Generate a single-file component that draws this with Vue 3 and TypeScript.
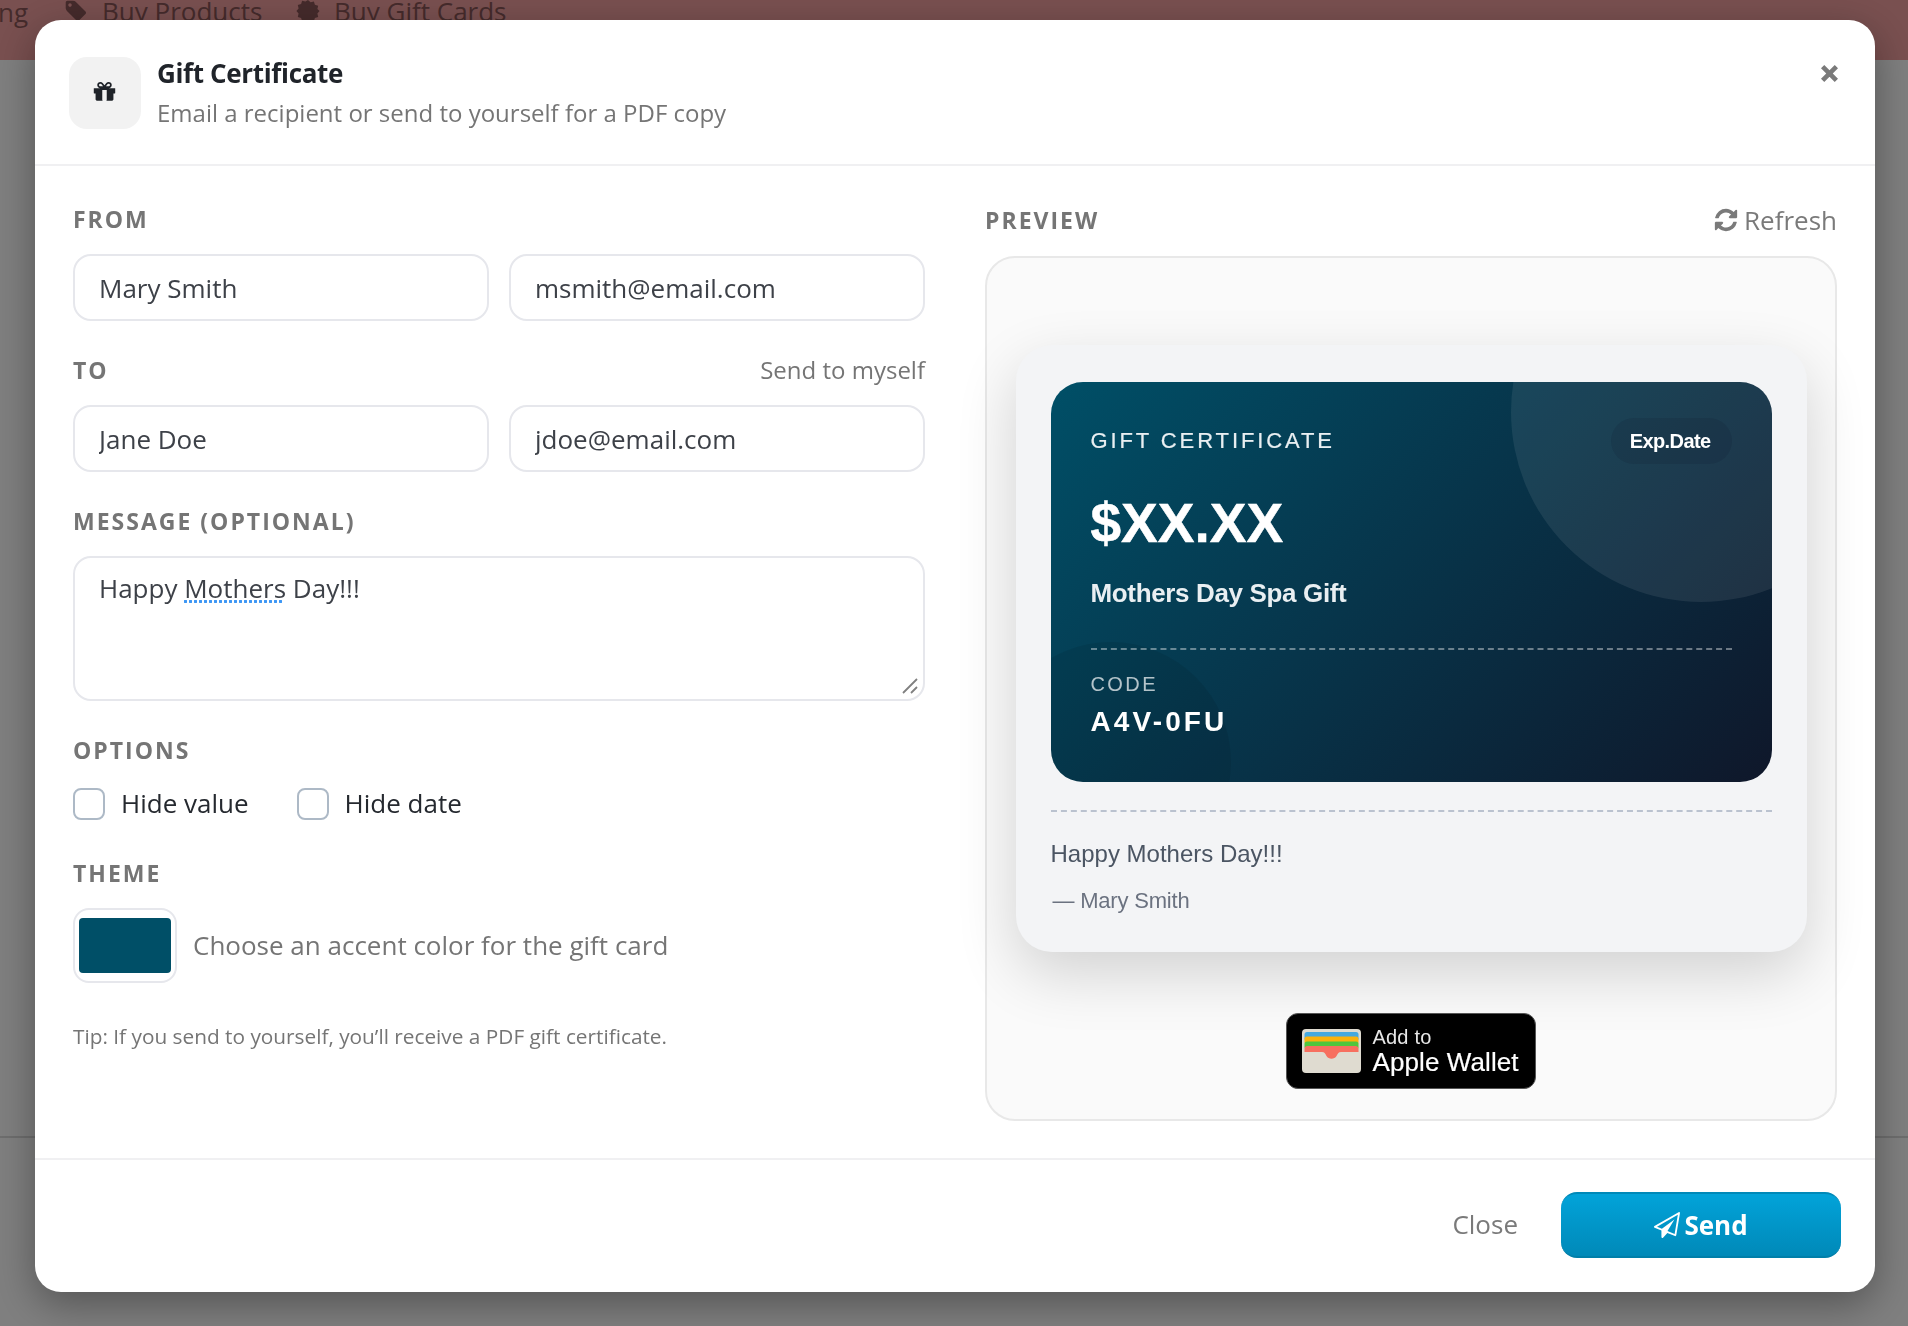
<script setup lang="ts">
import { ref } from 'vue'

const fromName = ref('Mary Smith')
const fromEmail = ref('msmith@email.com')
const toName = ref('Jane Doe')
const toEmail = ref('jdoe@email.com')
const message = ref('Happy Mothers Day!!!')
const accent = '#004f67'
</script>

<template>
  <div class="page">
    <nav class="topnav">
      <span class="navtext cut">ng</span>
      <span class="navitem">
        <svg class="navicon" viewBox="0 0 1792 1792"><path fill="currentColor" d="M576 448q0-53-37.5-90.5t-90.5-37.5-90.5 37.5-37.5 90.5 37.5 90.5 90.5 37.5 90.5-37.5 37.5-90.5zm1067 576q0 53-37 90l-491 492q-39 37-91 37-53 0-90-37l-715-716q-38-37-64.5-101t-26.5-117v-416q0-52 38-90t90-38h416q53 0 117 26.5t102 64.5l715 714q37 39 37 91z"/></svg>
        <span class="navtext">Buy Products</span>
      </span>
      <span class="navitem">
        <svg class="navicon" viewBox="0 0 24 24"><path fill="currentColor" d="M12 1l2.6 2.2 3.3-.8 1 3.3 3.3 1-.8 3.3L23.6 12l-2.2 2.6.8 3.3-3.3 1-1 3.3-3.3-.8L12 23.6l-2.6-2.2-3.3.8-1-3.3-3.3-1 .8-3.3L.4 12l2.2-2.6-.8-3.3 3.3-1 1-3.3 3.3.8z"/></svg>
        <span class="navtext">Buy Gift Cards</span>
      </span>
    </nav>
    <div class="page-rule"></div>
  </div>

  <div class="backdrop">
    <section class="modal">
      <header class="mhead">
        <div class="gift-tile">
          <svg class="gift" viewBox="0 0 1792 1792"><path fill="currentColor" d="M1056 1356v-716h-320v716q0 25 18 38.5t46 13.5h192q28 0 46-13.5t18-38.5zm-456-972h195l-126-161q-26-31-69-31-40 0-68 28t-28 68 28 68 68 28zm688-96q0-40-28-68t-68-28q-43 0-69 31l-125 161h194q40 0 68-28t28-68zm376 256v320q0 14-9 23t-23 9h-96v416q0 40-28 68t-68 28h-1088q-40 0-68-28t-28-68v-416h-96q-14 0-23-9t-9-23v-320q0-14 9-23t23-9h440q-93 0-158.5-65.5t-65.5-158.5 65.5-158.5 158.5-65.5q107 0 168 77l128 165 128-165q61-77 168-77 93 0 158.5 65.5t65.5 158.5-65.5 158.5-158.5 65.5h440q14 0 23 9t9 23z"/></svg>
        </div>
        <div class="titles">
          <h2>Gift Certificate</h2>
          <p>Email a recipient or send to yourself for a PDF copy</p>
        </div>
        <button class="x" aria-label="Close">
          <svg viewBox="0 0 18 18" width="19" height="19"><path d="M2.5 2.5l13 13M15.5 2.5l-13 13" stroke="currentColor" stroke-width="4.4" fill="none"/></svg>
        </button>
      </header>

      <div class="mbody">
        <div class="form">
          <div class="block first">
            <div class="lab">FROM</div>
            <div class="two">
              <input v-model="fromName" />
              <input v-model="fromEmail" />
            </div>
          </div>
          <div class="block">
            <div class="lab-row">
              <div class="lab">TO</div>
              <a class="myself">Send to myself</a>
            </div>
            <div class="two">
              <input v-model="toName" />
              <input v-model="toEmail" />
            </div>
          </div>
          <div class="block">
            <div class="lab">MESSAGE (OPTIONAL)</div>
            <div class="ta-wrap">
              <textarea v-model="message" spellcheck="false"></textarea>
              <span class="squiggle"></span>
              <svg class="grip" viewBox="0 0 16 16" width="16" height="16"><path d="M1 15L15 1M9 15l6-6" stroke="#808080" stroke-width="1.8" fill="none"/></svg>
            </div>
          </div>
          <div class="block">
            <div class="lab">OPTIONS</div>
            <div class="checks">
              <label class="chk"><input type="checkbox" /><span>Hide value</span></label>
              <label class="chk"><input type="checkbox" /><span>Hide date</span></label>
            </div>
          </div>
          <div class="block theme">
            <div class="lab">THEME</div>
            <div class="theme-row">
              <div class="swatch"><div class="swatch-fill" :style="{ background: accent }"></div></div>
              <span class="hint">Choose an accent color for the gift card</span>
            </div>
          </div>
          <p class="tip">Tip: If you send to yourself, you’ll receive a PDF gift certificate.</p>
        </div>

        <aside class="prev">
          <div class="lab-row prev-head">
            <div class="lab">PREVIEW</div>
            <a class="refresh">
              <svg viewBox="0 0 1792 1792" width="26" height="26"><path fill="currentColor" d="M1639 1056q0 5-1 7-64 268-268 434.5t-478 166.5q-146 0-282.5-55t-243.5-157l-129 129q-19 19-45 19t-45-19-19-45v-448q0-26 19-45t45-19h448q26 0 45 19t19 45-19 45l-137 137q71 66 161 102t187 36q134 0 250-65t186-179q11-17 53-117 8-23 30-23h192q13 0 22.5 9.5t9.5 22.5zm25-800v448q0 26-19 45t-45 19h-448q-26 0-45-19t-19-45 19-45l138-138q-148-137-349-137-134 0-250 65t-186 179q-11 17-53 117-8 23-30 23h-199q-13 0-22.5-9.5t-9.5-22.5v-7q65-268 270-434.5t480-166.5q146 0 284 55.5t245 156.5l130-129q19-19 45-19t45 19 19 45z"/></svg>
              <span>Refresh</span>
            </a>
          </div>
          <div class="panel">
            <div class="sheet">
              <div class="gcard">
                <span class="orb orb-a"></span>
                <span class="orb orb-b"></span>
                <div class="gc-top">
                  <span class="gc-title">GIFT CERTIFICATE</span>
                  <span class="gc-pill">Exp.Date</span>
                </div>
                <div class="gc-amt">$XX.XX</div>
                <div class="gc-name">Mothers Day Spa Gift</div>
                <div class="gc-rule"></div>
                <div class="gc-codelab">CODE</div>
                <div class="gc-code">A4V-0FU</div>
              </div>
              <div class="sheet-rule"></div>
              <div class="note">Happy Mothers Day!!!</div>
              <div class="sign">— Mary Smith</div>
            </div>
            <div class="wallet">
              <svg class="wallet-ico" viewBox="0 0 59 44" width="59" height="44">
                <rect x="0" y="0" width="59" height="44" rx="4" fill="#dfdbd0"/>
                <rect x="2.5" y="3" width="54" height="9" rx="2.5" fill="#45a9e0"/>
                <rect x="2.5" y="7.5" width="54" height="8" rx="2.5" fill="#fcb20c"/>
                <rect x="2.5" y="12.5" width="54" height="8" rx="2.5" fill="#4fc63c"/>
                <path d="M2.5 20a3 3 0 0 1 3-3h48a3 3 0 0 1 3 3v3H39c-2.5 0-3 1.500-4.500 4-2 3.500-8 3.500-10 0-1.500-2.500-2-4-4.500-4H2.500z" fill="#f76f5f"/>
              </svg>
              <div class="wallet-txt">
                <span class="w1">Add to</span>
                <span class="w2">Apple Wallet</span>
              </div>
            </div>
          </div>
        </aside>
      </div>

      <footer class="mfoot">
        <button class="close">Close</button>
        <button class="send">
          <svg viewBox="0 0 1792 1792" width="26" height="26"><path fill="currentColor" d="M1764 11q33 24 27 64l-256 1536q-5 29-32 45-14 8-31 8-11 0-24-5l-527-215-298 327q-18 21-47 21-14 0-23-4-19-7-30-23.5t-11-36.5v-452l-472-193q-37-14-40-55-3-39 32-59l1664-960q35-21 68 2zm-342 1499l221-1323-1434 827 336 137 863-639-478 797z"/></svg>
          <span>Send</span>
        </button>
      </footer>
    </section>
  </div>
</template>

<style>
html, body { margin: 0; background: #fff; }
</style>

<style scoped>
* { box-sizing: border-box; }
.page { height: 1326px; background: #fff; overflow: hidden; font-family: "Open Sans", sans-serif; }
.topnav { height: 60px; background: #f3a0a0; position: relative; overflow: hidden; }
.navtext { font-size: 26px; line-height: 30px; color: #8a5657; white-space: nowrap; }
.cut { position: absolute; left: -2px; top: -3px; }
.navitem { position: absolute; top: -4px; display: flex; align-items: center; gap: 14px; color: #8a5657; }
.navitem:nth-child(2) { left: 64px; }
.navitem:nth-child(3) { left: 296px; }
.navicon { width: 24px; height: 24px; }
.page-rule { margin-top: 1076px; height: 2px; background: #dcdcdc; }

.backdrop {
  position: fixed; inset: 0; background: rgba(0, 0, 0, .5);
  font-family: "Open Sans", sans-serif;
}
.modal {
  position: absolute; left: 35px; top: 20px; width: 1840px; height: 1272px;
  background: #fff; border-radius: 26px; display: flex; flex-direction: column;
  box-shadow: 0 12px 40px rgba(0, 0, 0, .35); overflow: hidden;
}

.mhead {
  height: 146px; flex: none; border-bottom: 2px solid #f0f0f2;
  display: flex; align-items: flex-start; padding: 37px 35px 0 34px;
}
.gift-tile {
  width: 72px; height: 72px; background: #f2f2f2; border-radius: 18px; padding-right: 2px;
  display: flex; align-items: center; justify-content: center; color: #1f2329; flex: none;
}
.gift { width: 25px; height: 25px; }
.titles { margin-left: 16px; margin-top: -2px; }
.titles h2 { margin: 0; font-size: 26px; line-height: 36px; font-weight: 700; letter-spacing: -.35px; color: #20242a; }
.titles p { margin: 4px 0 0; font-size: 24px; line-height: 36px; color: #757575; }
.x {
  margin-left: auto; margin-right: 1px; margin-top: 7px; padding: 0; background: none; border: 0; color: #7a7a7a;
  display: flex;
}

.mbody { flex: 1; display: flex; gap: 60px; padding: 38px 38px 0 38px; min-height: 0; }
.form { width: 852px; flex: none; }
.prev { flex: 1; min-width: 0; }

.lab { font-size: 23px; line-height: 30px; font-weight: 700; letter-spacing: 2px; color: #757575; }
.lab-row { display: flex; justify-content: space-between; align-items: center; }
.block { margin-top: 34px; }
.block.first { margin-top: 0; }
.two { display: grid; grid-template-columns: 1fr 1fr; gap: 20px; margin-top: 20px; }
input:not([type]) , textarea {
  font-family: inherit; font-size: 26px; color: #3d4148; background: #fff;
  border: 2px solid #e6e7ec; border-radius: 18px; outline: 0; width: 100%;
}
input:not([type]) { height: 67px; padding: 0 24px; }
.myself { font-size: 24px; line-height: 30px; color: #757575; }
.ta-wrap { position: relative; margin-top: 20px; height: 145px; }
textarea { display: block; height: 145px; padding: 12px 24px; line-height: 36px; resize: none; }
.squiggle {
  position: absolute; left: 111px; top: 44px; width: 100px; height: 3px;
  background: radial-gradient(circle at 1.5px 1.5px, #3d97f5 1.4px, transparent 1.6px) 0 0 / 5px 3px repeat-x;
}
.grip { position: absolute; right: 7px; bottom: 7px; }

.checks { display: flex; gap: 48px; margin-top: 23px; height: 31px; align-items: center; }
.chk { display: flex; align-items: center; gap: 16px; font-size: 26px; line-height: 32px; color: #25292f; }
.chk span { padding-bottom: 2px; }
.chk input {
  appearance: none; width: 32px; height: 32px; margin: 0; background: #fff;
  border: 2px solid #adb9c6; border-radius: 8px;
}
.theme { margin-top: 39px; }
.theme-row { display: flex; align-items: center; gap: 16px; margin-top: 20px; }
.swatch {
  width: 104px; height: 75px; padding: 8px 4px; border: 2px solid #e6e7ec; border-radius: 16px; background: #fff;
}
.swatch-fill { width: 100%; height: 100%; border-radius: 4px; }
.hint { font-size: 26px; color: #757575; padding-bottom: 2px; }
.tip { margin: 37px 0 0; font-size: 20.8px; line-height: 32px; color: #757575; }

.prev-head { height: 30px; margin-top: 1px; margin-bottom: 21px; }
.refresh { display: flex; align-items: center; gap: 5px; font-size: 26px; line-height: 30px; color: #7a7a7a; }
.panel {
  height: 865px; border: 2px solid #e8e8e8; border-radius: 30px; background: #fafafa;
  padding: 87px 28px 0; display: flex; flex-direction: column; align-items: center;
}
.sheet {
  width: 791px; height: 607px; background: #f3f4f6; border-radius: 36px; padding: 37px 35px 0;
  box-shadow: 0 22px 60px rgba(0, 0, 0, .16); flex: none;
  font-family: "Liberation Sans", sans-serif;
}
.gcard {
  position: relative; overflow: hidden; height: 400px; border-radius: 32px; color: #fff;
  padding: 42px 40px 0; background: linear-gradient(135deg, #004f67 0%, #0f172a 100%);
}
.orb { position: absolute; border-radius: 50%; }
.orb-a { width: 380px; height: 380px; left: 460px; top: -160px; background: rgba(255, 255, 255, .08); }
.orb-b { width: 240px; height: 240px; left: -60px; top: 260px; background: rgba(0, 0, 0, .08); }
.gc-top { position: relative; display: flex; justify-content: space-between; align-items: center; height: 46px; margin-top: -6px; }
.gc-title { font-size: 22px; letter-spacing: 2.9px; color: #e9eff2; -webkit-text-stroke: .2px #e9eff2; }
.gc-pill {
  height: 46px; line-height: 46px; padding: 0 21px 0 19px; border-radius: 23px; font-size: 20px; font-weight: 700;
  letter-spacing: -.6px; background: rgba(15, 23, 42, .14);
}
.gc-amt { position: relative; font-size: 55px; font-weight: 700; line-height: 60px; margin-top: 29px; -webkit-text-stroke: .5px #fff; }
.gc-name { position: relative; font-size: 26px; font-weight: 700; line-height: 32px; letter-spacing: -.35px; margin-top: 24px; color: #e9eff2; }
.gc-rule { position: relative; border-top: 2px dashed rgba(255, 255, 255, .4); margin-top: 39px; }
.gc-codelab { position: relative; font-size: 20px; letter-spacing: 2.4px; line-height: 24px; margin-top: 22px; color: rgba(255, 255, 255, .7); }
.gc-code { position: relative; font-size: 28px; font-weight: 700; letter-spacing: 3.1px; line-height: 32px; margin-top: 10px; }
.sheet-rule { border-top: 2px dashed #bac2cf; margin-top: 28px; }
.note { font-size: 24px; line-height: 32px; color: #4b5563; margin-top: 26px; }
.sign { font-size: 22px; line-height: 30px; color: #6b7280; margin-top: 16px; padding-left: 2px; letter-spacing: -.2px; }

.wallet {
  width: 250px; height: 76px; margin-top: 61px; margin-right: 1px; background: #000; border-radius: 12px; flex: none;
  border: 1px solid #555; display: flex; align-items: center; padding-left: 15px; gap: 12px;
  font-family: "Liberation Sans", sans-serif; color: #fff;
}
.wallet-ico { flex: none; }
.wallet-txt { display: flex; flex-direction: column; }
.w1 { font-size: 20px; line-height: 21px; color: #e8e8e8; letter-spacing: .2px; }
.w2 { font-size: 26px; line-height: 28px; white-space: nowrap; letter-spacing: .1px; -webkit-text-stroke: .2px #fff; }

.mfoot {
  margin-top: auto; height: 134px; flex: none; border-top: 2px solid #f0f0f2;
  display: flex; align-items: center; justify-content: flex-end; padding: 0 34px 2px 0; gap: 43px;
}
.close { border: 0; background: none; padding: 0 0 2px; font-family: inherit; font-size: 26px; color: #7a7a7a; }
.send {
  width: 280px; height: 66px; border-radius: 16px; border: 0; color: #fff;
  border-top: 2px solid #0089b8; border-bottom: 2px solid #007fa9;
  background: linear-gradient(180deg, #02a3d9, #0089b8);
  font-family: inherit; font-size: 26px; font-weight: 700;
  display: flex; align-items: center; justify-content: center; gap: 4px;
}
</style>
